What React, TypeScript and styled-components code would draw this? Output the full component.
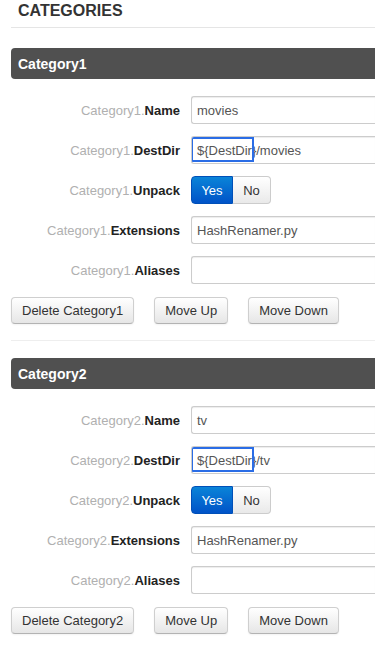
import styled, { createGlobalStyle } from 'styled-components';

const Global = createGlobalStyle`
  html, body {
    margin: 0;
    padding: 0;
    background: #fff;
    overflow: hidden;
  }
  body {
    font-family: "Liberation Sans", Arial, Helvetica, sans-serif;
    font-size: 13px;
    color: #333;
  }
`;

const Page = styled.div`
  padding-left: 11px;
  overflow: hidden;
`;

const Heading = styled.h2`
  margin: 0 0 20px;
  padding: 1px 7px 6px;
  font-size: 16px;
  line-height: 20px;
  font-weight: bold;
  color: #333;
  border-bottom: 1px solid #e5e5e5;
`;

const Section = styled.section<{ $last?: boolean }>`
  padding-bottom: 16px;
  margin-bottom: 17px;
  border-bottom: ${(p) => (p.$last ? 'none' : '1px solid #eee')};
`;

const Bar = styled.div`
  height: 31px;
  display: flex;
  align-items: center;
  padding-left: 7px;
  background: #505050;
  border-radius: 4px 0 0 4px;
  color: #fff;
  font-size: 14px;
  font-weight: bold;
  margin-bottom: 17px;
`;

const Row = styled.div`
  display: flex;
  align-items: center;
  gap: 11px;
  margin-bottom: 12px;
`;

const Label = styled.div`
  flex: 0 0 169px;
  text-align: right;
  font-size: 13px;
  white-space: nowrap;
`;

const Prefix = styled.span`
  color: #b0b0b0;
`;

const Key = styled.span`
  color: #222;
  font-weight: bold;
`;

// the right end of each field is cut off by the viewport in the reference
const Field = styled.div`
  position: relative;
  flex: 1;
  min-width: 0;
  box-sizing: border-box;
  height: 28px;
  padding: 0 5px;
  display: flex;
  align-items: center;
  border: 1px solid #ccc;
  border-right: none;
  border-radius: 3px 0 0 3px;
  box-shadow: inset 0 1px 1px rgba(0, 0, 0, 0.075);
  color: #555;
  font-size: 13px;
  white-space: nowrap;
  overflow: hidden;
`;

const Mark = styled.span`
  position: absolute;
  left: -1px;
  top: 0;
  width: 63px;
  height: 25px;
  box-sizing: border-box;
  border: 2px solid #2a6de6;
  pointer-events: none;
`;

const Toggle = styled.div`
  display: flex;
  height: 28px;
`;

const ToggleBtn = styled.div<{ $on?: boolean; $w: number }>`
  box-sizing: border-box;
  width: ${(p) => p.$w}px;
  display: flex;
  align-items: center;
  justify-content: center;
  font-size: 13px;
  border: 1px solid ${(p) => (p.$on ? '#0050b8' : '#ccc')};
  color: ${(p) => (p.$on ? '#fff' : '#333')};
  background: ${(p) =>
    p.$on
      ? 'linear-gradient(#0a84d8, #0053c8)'
      : 'linear-gradient(#fff, #e9e9e9)'};
  &:first-child {
    border-radius: 4px 0 0 4px;
  }
  &:last-child {
    border-radius: 0 4px 4px 0;
    border-left: none;
  }
`;

const Actions = styled.div`
  display: flex;
  gap: 20px;
  padding-top: 1px;
`;

const Button = styled.div`
  box-sizing: border-box;
  height: 27px;
  padding: 0 10px;
  display: flex;
  align-items: center;
  font-size: 13px;
  color: #333;
  background: linear-gradient(#fff, #e6e6e6);
  border: 1px solid #cfcfcf;
  border-bottom-color: #b3b3b3;
  border-radius: 4px;
  box-shadow: 0 1px 2px rgba(0, 0, 0, 0.05);
`;

type Cat = { n: number; name: string; dir: string };

const cats: Cat[] = [
  { n: 1, name: 'movies', dir: 'movies' },
  { n: 2, name: 'tv', dir: 'tv' },
];

function Lbl({ n, k }: { n: number; k: string }) {
  return (
    <Label>
      <Prefix>Category{n}.</Prefix>
      <Key>{k}</Key>
    </Label>
  );
}

function CategoryBlock({ c, last }: { c: Cat; last?: boolean }) {
  return (
    <Section $last={last}>
      <Bar>Category{c.n}</Bar>
      <Row>
        <Lbl n={c.n} k="Name" />
        <Field>{c.name}</Field>
      </Row>
      <Row>
        <Lbl n={c.n} k="DestDir" />
        <Field>
          {'${DestDir}/' + c.dir}
          <Mark />
        </Field>
      </Row>
      <Row>
        <Lbl n={c.n} k="Unpack" />
        <Toggle>
          <ToggleBtn $on $w={42}>Yes</ToggleBtn>
          <ToggleBtn $w={38}>No</ToggleBtn>
        </Toggle>
      </Row>
      <Row>
        <Lbl n={c.n} k="Extensions" />
        <Field>HashRenamer.py</Field>
      </Row>
      <Row>
        <Lbl n={c.n} k="Aliases" />
        <Field />
      </Row>
      <Actions>
        <Button>Delete Category{c.n}</Button>
        <Button>Move Up</Button>
        <Button>Move Down</Button>
      </Actions>
    </Section>
  );
}

export default function App() {
  return (
    <>
      <Global />
      <Page>
        <Heading>CATEGORIES</Heading>
        {cats.map((c, i) => (
          <CategoryBlock key={c.n} c={c} last={i === cats.length - 1} />
        ))}
      </Page>
    </>
  );
}
